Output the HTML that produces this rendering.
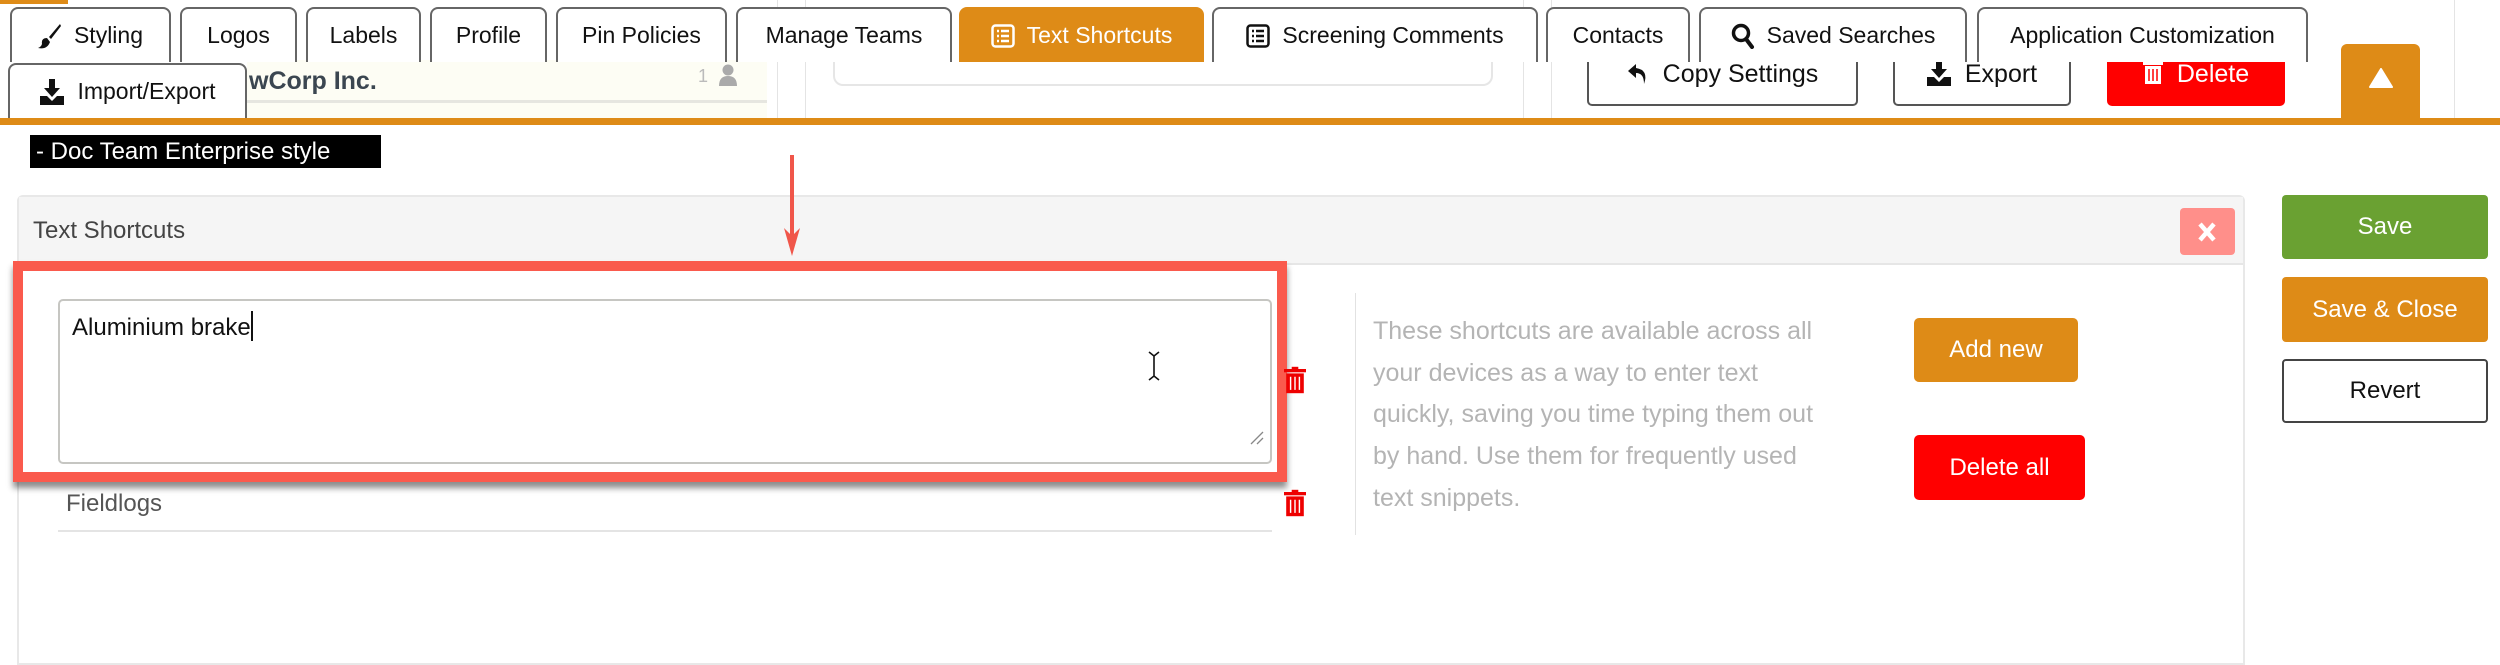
<!DOCTYPE html>
<html><head><meta charset="utf-8"><style>
*{box-sizing:border-box;margin:0;padding:0}
body{width:2500px;height:649px;background:#fff;position:relative;overflow:hidden;font-family:"Liberation Sans",sans-serif;color:#222}
.a{position:absolute}
.tab{position:absolute;top:7px;height:55px;background:#fff;border:2px solid #666;border-bottom:none;border-radius:8px 8px 0 0;font-size:23px;display:flex;align-items:center;justify-content:center;gap:12px;color:#111;white-space:nowrap}
.tab svg{flex:none}
.btn{position:absolute;border-radius:5px;font-size:24px;display:flex;align-items:center;justify-content:center;gap:14px}
</style></head><body>
<div class="a" style="left:0;top:0;width:68px;height:4px;background:#de8b17"></div>
<div class="a" style="left:247px;top:60px;width:520px;height:58px;background:#fdfdf4"></div>
<div class="a" style="left:247px;top:100px;width:520px;height:3px;background:#e6e6e0"></div>
<div class="a" style="left:249px;top:67px;font-weight:bold;font-size:25px;color:#3b4650">wCorp Inc.</div>
<div class="a" style="left:698px;top:66px;font-size:18px;color:#bbb">1</div>
<svg class="a" style="left:718px;top:64px" width="20" height="22" viewBox="0 0 20 22"><circle cx="10" cy="6" r="5.5" fill="#aaa"/><path d="M1 22 Q1 12 10 12 Q19 12 19 22Z" fill="#aaa"/></svg>
<div class="a" style="left:777px;top:0;width:1px;height:118px;background:#e4e4e4"></div>
<div class="a" style="left:805px;top:0;width:1px;height:118px;background:#e4e4e4"></div>
<div class="a" style="left:833px;top:40px;width:660px;height:46px;border:2px solid #e6e6e6;border-top:none;border-radius:0 0 10px 10px"></div>
<div class="a" style="left:1523px;top:0;width:1px;height:118px;background:#e4e4e4"></div>
<div class="a" style="left:1551px;top:0;width:1px;height:118px;background:#e4e4e4"></div>
<div class="a" style="left:2454px;top:0;width:1px;height:118px;background:#e4e4e4"></div>

<div class="btn" style="left:1587px;top:58px;width:271px;height:48px;border:2px solid #555;border-top:none;border-radius:0 0 5px 5px;color:#111;align-items:flex-start;padding-top:2px">
<svg width="22" height="24" viewBox="0 0 22 24" style="margin-top:2px"><path d="M9 2 L1 9 L9 16 V11 Q17 11 17 22 Q22 8 9 6Z" fill="#111"/></svg><span style="font-size:25px">Copy Settings</span></div>
<div class="btn" style="left:1893px;top:58px;width:178px;height:48px;border:2px solid #555;border-top:none;border-radius:0 0 5px 5px;color:#111;align-items:flex-start;padding-top:2px">
<svg width="24" height="26" viewBox="0 0 24 26"><path d="M9 0h6v9h5l-8 9-8-9h5z M0 17h7l5 5 5-5h7v9H0z" fill="#111"/></svg><span style="font-size:25px">Export</span></div>
<div class="btn" style="left:2107px;top:58px;width:178px;height:48px;background:#f00;color:#fff;border-radius:0 0 5px 5px;align-items:flex-start;padding-top:2px">
<svg width="20" height="24" viewBox="0 0 20 24"><rect x="0" y="2" width="20" height="3" fill="#fff"/><rect x="7" y="0" width="6" height="3" fill="#fff"/><rect x="2" y="6" width="16" height="18" fill="#fff"/><path d="M6 9v12M10 9v12M14 9v12" stroke="#f00" stroke-width="1.5"/></svg><span style="font-size:25px">Delete</span></div>
<div class="a" style="left:2341px;top:44px;width:79px;height:76px;background:#de8b17;border-radius:6px 6px 0 0"></div>
<svg class="a" style="left:2369px;top:68px" width="24" height="20" viewBox="0 0 24 20"><path d="M12 1 L23 19 H1Z" fill="#fff" stroke="#fff" stroke-linejoin="round" stroke-width="2"/></svg>

<div class="tab" style="left:10px;width:161px"><svg width="24" height="26" viewBox="0 0 24 26"><path d="M22 1 L11 14 L13 16 L23 3Z" fill="#111"/><path d="M9 15 Q3 15 4 21 Q3 24 0 25 Q9 27 12 19Z" fill="#111"/></svg>Styling</div>
<div class="tab" style="left:180px;width:117px">Logos</div>
<div class="tab" style="left:306px;width:115px">Labels</div>
<div class="tab" style="left:430px;width:117px">Profile</div>
<div class="tab" style="left:556px;width:171px">Pin Policies</div>
<div class="tab" style="left:736px;width:216px">Manage Teams</div>
<div class="tab" style="left:959px;width:245px;background:#de8b17;border-color:#de8b17;color:#fff"><svg width="24" height="24" viewBox="0 0 24 24"><rect x="1.5" y="1.5" width="21" height="21" rx="3" fill="none" stroke="#fff" stroke-width="2.5"/><path d="M6 7h2M6 12h2M6 17h2M10 7h8M10 12h8M10 17h8" stroke="#fff" stroke-width="2.5"/></svg>Text Shortcuts</div>
<div class="tab" style="left:1212px;width:326px"><svg width="24" height="24" viewBox="0 0 24 24"><rect x="1.5" y="1.5" width="21" height="21" rx="3" fill="none" stroke="#111" stroke-width="2.5"/><path d="M6 7h2M6 12h2M6 17h2M10 7h8M10 12h8M10 17h8" stroke="#111" stroke-width="2.5"/></svg>Screening Comments</div>
<div class="tab" style="left:1546px;width:144px">Contacts</div>
<div class="tab" style="left:1699px;width:268px"><svg width="24" height="26" viewBox="0 0 24 26"><circle cx="10" cy="10" r="7.5" fill="none" stroke="#111" stroke-width="3.5"/><path d="M15 16 L21 24" stroke="#111" stroke-width="4" stroke-linecap="round"/></svg>Saved Searches</div>
<div class="tab" style="left:1977px;width:331px">Application Customization</div>
<div class="tab" style="left:8px;top:63px;width:239px"><svg width="26" height="26" viewBox="0 0 24 26"><path d="M9 0h6v9h5l-8 9-8-9h5z M0 17h7l5 5 5-5h7v9H0z" fill="#111"/></svg>Import/Export</div>

<div class="a" style="left:0;top:118px;width:2500px;height:7px;background:#de8b17"></div>

<div class="a" style="left:30px;top:135px;width:351px;height:33px;background:#000;color:#fff;font-size:24px;line-height:33px;padding-left:6px">- Doc Team Enterprise style</div>

<div class="a" style="left:17px;top:195px;width:2228px;height:470px;border:2px solid #e8e8e8;border-radius:6px 6px 0 0"></div>
<div class="a" style="left:19px;top:197px;width:2224px;height:68px;background:#f5f5f5;border-bottom:2px solid #e6e6e6"></div>
<div class="a" style="left:33px;top:217px;font-size:24px;color:#444">Text Shortcuts</div>
<div class="a" style="left:2180px;top:208px;width:55px;height:47px;background:#ff8f8a;border-radius:4px"></div>
<svg class="a" style="left:2197px;top:221px" width="20" height="22" viewBox="0 0 20 22"><path d="M3 3 L17 19 M17 3 L3 19" stroke="#fff" stroke-width="4.5"/></svg>

<div class="a" style="left:790px;top:155px;width:4px;height:85px;background:#f0564a"></div>
<svg class="a" style="left:782px;top:228px" width="20" height="28" viewBox="0 0 20 28"><path d="M2 0 L10 8 L18 0 L10 28Z" fill="#f0564a"/></svg>

<div class="a" style="left:13px;top:261px;width:1274px;height:221px;border:10px solid #fa5a4d;box-shadow:0 6px 6px rgba(0,0,0,.45);background:#fff"></div>
<div class="a" style="left:58px;top:299px;width:1214px;height:165px;border:2px solid #c6c6c2;border-radius:5px;background:#fff"></div>
<div class="a" style="left:72px;top:311px;font-size:24px;color:#111">Aluminium brake<span style="display:inline-block;width:2px;height:30px;background:#111;vertical-align:-6px"></span></div>
<svg class="a" style="left:1148px;top:351px" width="12" height="30" viewBox="0 0 12 30"><path d="M1 1 L6 5 L11 1 M6 5 V25 M1 29 L6 25 L11 29" stroke="#111" stroke-width="1.6" fill="none"/></svg>
<svg class="a" style="left:1250px;top:431px" width="14" height="14" viewBox="0 0 14 14"><path d="M13 1 L1 13 M13 7 L7 13" stroke="#888" stroke-width="1.3"/></svg>

<svg class="a" style="left:1284px;top:366px" width="22" height="28" viewBox="0 0 20 24"><rect x="0" y="2" width="20" height="3" fill="#e00"/><rect x="7" y="0" width="6" height="3" fill="#e00"/><rect x="2" y="6" width="16" height="18" fill="#e00"/><path d="M6 9v12M10 9v12M14 9v12" stroke="#fff" stroke-width="1.3"/></svg>
<div class="a" style="left:66px;top:490px;font-size:24px;color:#555">Fieldlogs</div>
<div class="a" style="left:58px;top:530px;width:1214px;height:2px;background:#e4e4e4"></div>
<svg class="a" style="left:1284px;top:489px" width="22" height="28" viewBox="0 0 20 24"><rect x="0" y="2" width="20" height="3" fill="#e00"/><rect x="7" y="0" width="6" height="3" fill="#e00"/><rect x="2" y="6" width="16" height="18" fill="#e00"/><path d="M6 9v12M10 9v12M14 9v12" stroke="#fff" stroke-width="1.3"/></svg>

<div class="a" style="left:1355px;top:293px;width:1px;height:242px;background:#e2e2e2"></div>
<div class="a" style="left:1373px;top:311px;white-space:nowrap;font-size:25px;line-height:41.7px;color:#b4b4b4">These shortcuts are available across all<br>your devices as a way to enter text<br>quickly, saving you time typing them out<br>by hand. Use them for frequently used<br>text snippets.</div>
<div class="btn" style="left:1914px;top:318px;width:164px;height:64px;background:#de8b17;color:#fff">Add new</div>
<div class="btn" style="left:1914px;top:435px;width:171px;height:65px;background:#f00;color:#fff">Delete all</div>

<div class="btn" style="left:2282px;top:195px;width:206px;height:64px;background:#6aa132;color:#fff;border-radius:4px">Save</div>
<div class="btn" style="left:2282px;top:277px;width:206px;height:65px;background:#de8b17;color:#fff;border-radius:4px">Save &amp; Close</div>
<div class="btn" style="left:2282px;top:359px;width:206px;height:64px;border:2px solid #444;color:#111;border-radius:4px">Revert</div>
</body></html>
